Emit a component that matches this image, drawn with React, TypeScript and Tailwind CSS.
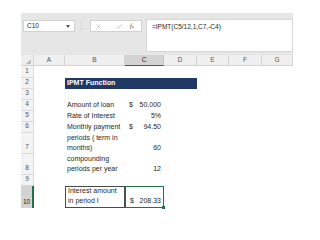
import type { ReactNode } from "react";

const font = "font-['Liberation_Sans',Arial,sans-serif]";

function Head({ children, active }: { children?: ReactNode; active?: boolean }) {
  return (
    <div
      className={
        active
          ? "flex items-center justify-center border-r border-b border-b-[#217346] border-r-[#c6c6c6] bg-[#d3d3d3] text-[#222]"
          : "flex items-center justify-center border-r border-b border-[#d4d4d4] bg-[#efefef] text-[#555]"
      }
    >
      {children}
    </div>
  );
}

function RowNum({ n, active }: { n: number; active?: boolean }) {
  return (
    <div
      className={
        active
          ? "flex items-end justify-center border-r-2 border-[#217346] bg-[#d3d3d3] pb-[1px] text-[#222]"
          : "flex items-end justify-center border-r border-b border-[#dadada] bg-[#f3f3f3] pb-[1px] text-[#555]"
      }
    >
      {n}
    </div>
  );
}

function Money({ sign, value }: { sign?: boolean; value: string }) {
  return (
    <div className="flex items-end justify-between pb-[1px] pl-[4px] pr-[3px] text-[7px]">
      <span>{sign ? "$" : ""}</span>
      <span>{value}</span>
    </div>
  );
}

function Label({ lines }: { lines: string[] }) {
  return (
    <div className="flex flex-col justify-end pb-[1px] pl-[2px] text-[7px] leading-[10px]">
      {lines.map((l) => (
        <span key={l} className="whitespace-nowrap">
          {l}
        </span>
      ))}
    </div>
  );
}

function Empty({ n }: { n: number }) {
  return (
    <>
      {Array.from({ length: n }).map((_, i) => (
        <div key={i} />
      ))}
    </>
  );
}

export default function App() {
  return (
    <div className={`h-[240px] w-[320px] bg-white pl-[21px] pt-[13px] text-[6.5px] text-[#1f1f1f] ${font}`}>
      <div className="flex w-[272px] flex-col">
        {/* formula bar */}
        <div className="flex h-[42px] bg-[#e6e6e6] pl-[2px] pt-[6px]">
          <div className="mt-[1px] flex h-[12px] w-[52px] items-center justify-between border border-[#d2d2d2] bg-white pl-[3px] pr-[4px]">
            <span>C10</span>
            <svg width="4" height="3" viewBox="0 0 4 3">
              <path d="M0 0h4L2 3z" fill="#555" />
            </svg>
          </div>
          <div className="ml-[6px] mt-[3px] flex h-[7px] flex-col justify-between">
            <span className="block h-[1px] w-[1px] bg-[#b5b5b5]" />
            <span className="block h-[1px] w-[1px] bg-[#b5b5b5]" />
            <span className="block h-[1px] w-[1px] bg-[#b5b5b5]" />
          </div>
          <div className="ml-[8px] mt-[1px] flex h-[12px] w-[52px] items-center border border-[#d2d2d2] bg-white pl-[5px]">
            <svg width="5" height="5" viewBox="0 0 5 5">
              <path d="M0.5 0.5l4 4M4.5 0.5l-4 4" stroke="#b0b0b0" strokeWidth="0.7" />
            </svg>
            <svg className="ml-[15px]" width="6" height="5" viewBox="0 0 6 5">
              <path d="M0.5 2.8l1.6 1.6L5.5 0.5" stroke="#a8a8a8" strokeWidth="0.7" fill="none" />
            </svg>
            <span className="ml-[8px] font-['Liberation_Serif',serif] text-[6.5px] italic text-[#444]">
              f<span className="text-[4.5px]">x</span>
            </span>
          </div>
          <div className="ml-[4px] flex h-[33px] flex-1 border border-[#d6d6d6] bg-white pl-[5px] pt-[2px]">
            <span>=IPMT(C5/12,1,C7,-C4)</span>
          </div>
        </div>

        {/* sheet */}
        <div className="grid grid-cols-[13px_31px_60px_39px_33px_32px_33px_31px] grid-rows-[11px_12px_11px_11px_11px_11px_11px_21px_21px_11px_22px]">
          <div className="relative border-r border-b border-[#d4d4d4] bg-[#efefef]">
            <svg className="absolute bottom-[1px] right-[2px]" width="5" height="5" viewBox="0 0 5 5">
              <path d="M5 0v5H0z" fill="#bdbdbd" />
            </svg>
          </div>
          <Head>A</Head>
          <Head>B</Head>
          <Head active>C</Head>
          <Head>D</Head>
          <Head>E</Head>
          <Head>F</Head>
          <Head>G</Head>

          <RowNum n={1} />
          <Empty n={7} />

          <RowNum n={2} />
          <div />
          <div className="col-span-3 flex items-center bg-[#1f3864] pl-[2px] text-[7px] font-bold text-white">
            IPMT Function
          </div>
          <Empty n={3} />

          <RowNum n={3} />
          <Empty n={7} />

          <RowNum n={4} />
          <div />
          <Label lines={["Amount of loan"]} />
          <Money sign value="50,000" />
          <Empty n={4} />

          <RowNum n={5} />
          <div />
          <Label lines={["Rate of Interest"]} />
          <Money value="5%" />
          <Empty n={4} />

          <RowNum n={6} />
          <div />
          <Label lines={["Monthly payment"]} />
          <Money sign value="94.50" />
          <Empty n={4} />

          <RowNum n={7} />
          <div />
          <Label lines={["periods ( term in", "months)"]} />
          <Money value="60" />
          <Empty n={4} />

          <RowNum n={8} />
          <div />
          <Label lines={["compounding", "periods per year"]} />
          <Money value="12" />
          <Empty n={4} />

          <RowNum n={9} />
          <Empty n={7} />

          <RowNum n={10} active />
          <div />
          <div className="flex flex-col justify-end border border-[#4a4a4a] pb-[1px] pl-[2px] text-[7px] leading-[10px]">
            <span>Interest amount</span>
            <span>in period I</span>
          </div>
          <div className="relative flex items-end justify-between border border-[#217346] pb-[1px] pl-[4px] pr-[2px] text-[7px]">
            <span>$</span>
            <span>208.33</span>
            <span className="absolute -bottom-[2px] -right-[2px] h-[3px] w-[3px] bg-[#217346]" />
          </div>
          <Empty n={4} />
        </div>
      </div>
    </div>
  );
}
